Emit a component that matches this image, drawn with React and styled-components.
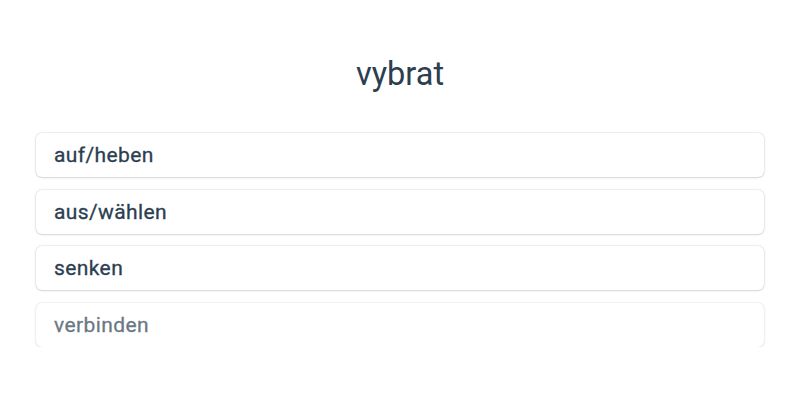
import styled, { createGlobalStyle } from "styled-components"

const Global = createGlobalStyle`
  body {
    margin: 0;
    background: #ffffff;
    font-family: Roboto, "Liberation Sans", sans-serif;
  }
`

const options = [
  { label: "auf/heben" },
  { label: "aus/wählen" },
  { label: "senken" },
  { label: "verbinden", faded: true },
]

export default function App() {
  return (
    <>
      <Global />
      <St.Page>
        <St.Title>vybrat</St.Title>
        <St.List>
          {options.map((o) => (
            <St.Option key={o.label} $faded={o.faded}>
              {o.label}
            </St.Option>
          ))}
        </St.List>
      </St.Page>
    </>
  )
}

const St = {
  Page: styled.div`
    padding: 52px 36px 0;
    display: flex;
    flex-direction: column;
  `,
  Title: styled.div`
    text-align: center;
    font-size: 32.5px;
    line-height: 44px;
    color: #2c3e50;
    margin-bottom: 37px;
  `,
  List: styled.div`
    display: flex;
    flex-direction: column;
    gap: 12.5px;
  `,
  Option: styled.div`
    height: 44px;
    box-sizing: border-box;
    padding: 0 18px;
    display: flex;
    align-items: center;
    border-radius: 6px;
    background: #fff;
    box-shadow: 0 0 2px rgba(0, 0, 0, 0.24), 0 1px 2px rgba(0, 0, 0, 0.1);
    font-size: 21px;
    letter-spacing: 0.4px;
    font-weight: 400;
    -webkit-text-stroke: 0.3px #2c3e50;
    color: #2c3e50;
    opacity: ${(p) => (p.$faded ? 0.7 : 1)};
  `,
}
